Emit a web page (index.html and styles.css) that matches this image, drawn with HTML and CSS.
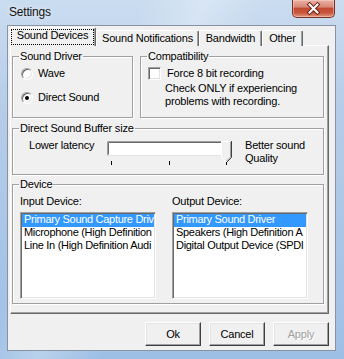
FILE: index.html
```html
<!DOCTYPE html>
<html>
<head>
<meta charset="utf-8">
<title>Settings</title>
<link rel="stylesheet" href="styles.css">
</head>
<body>
<div class="window">
  <div class="titlebar">
    <span class="title">Settings</span>
    <div class="close">
      <svg width="41" height="16" viewBox="0 0 41 16">
        <path d="M16.5 3.5 L24.5 11.5 M24.5 3.5 L16.5 11.5" stroke="#6a2418" stroke-width="4" stroke-linecap="square" fill="none"/>
        <path d="M16.5 3.5 L24.5 11.5 M24.5 3.5 L16.5 11.5" stroke="#ffffff" stroke-width="2" stroke-linecap="square" fill="none"/>
      </svg>
    </div>
  </div>
  <div class="client">
    <div class="tabs">
      <div class="tab selected t1"><span class="focus">Sound Devices</span></div>
      <div class="tab t2">Sound Notifications</div>
      <div class="tab t3">Bandwidth</div>
      <div class="tab t4">Other</div>
    </div>
    <div class="panel">
      <div class="row1">
        <fieldset class="group g-driver">
          <legend>Sound Driver</legend>
          <div class="opt"><span class="radio"></span>Wave</div>
          <div class="opt opt2"><span class="radio checked"></span>Direct Sound</div>
        </fieldset>
        <fieldset class="group g-compat">
          <legend>Compatibility</legend>
          <div class="opt opt-c"><span class="check"></span>Force 8 bit recording</div>
          <div class="note">Check ONLY if experiencing<br>problems with recording.</div>
        </fieldset>
      </div>
      <fieldset class="group g-buffer">
        <legend>Direct Sound Buffer size</legend>
        <div class="slider-row">
          <span class="lbl-low">Lower latency</span>
          <svg class="slider" width="125" height="25" viewBox="0 0 125 25">
            <rect x="0" y="0" width="123" height="15" fill="#ffffff"/>
            <path d="M0.5 14.5V0.5H122.5" stroke="#a0a0a0" fill="none"/>
            <path d="M1.5 13.5V1.5H121.5" stroke="#696969" fill="none"/>
            <path d="M0.5 14.5H122.5V0.5" stroke="#e3e3e3" fill="none"/>
            <polygon points="114,0 124,0 124,16 119,21 114,16" fill="#f0f0f0"/>
            <path d="M114.5 16V0.5H123.5" stroke="#ffffff" fill="none"/>
            <path d="M124.5 0V16.5L119.5 21.5" stroke="#404040" fill="none"/>
            <path d="M123.5 1V16L119.5 20" stroke="#a0a0a0" fill="none"/>
            <path d="M114.5 16.5L119 21" stroke="#ffffff" fill="none"/>
            <rect x="4" y="20" width="1" height="4" fill="#000000"/>
            <rect x="62" y="20" width="1" height="4" fill="#000000"/>
            <rect x="119" y="21" width="1" height="3" fill="#000000"/>
          </svg>
          <span class="lbl-high">Better sound<br>Quality</span>
        </div>
      </fieldset>
      <fieldset class="group g-device">
        <legend>Device</legend>
        <div class="lists">
          <div class="col">
            <div class="lbl">Input Device:</div>
            <div class="listbox">
              <div class="item sel">Primary Sound Capture Driv</div>
              <div class="item">Microphone (High Definition</div>
              <div class="item">Line In (High Definition Audi</div>
            </div>
          </div>
          <div class="col">
            <div class="lbl">Output Device:</div>
            <div class="listbox">
              <div class="item sel">Primary Sound Driver</div>
              <div class="item">Speakers (High Definition A</div>
              <div class="item">Digital Output Device (SPDI</div>
            </div>
          </div>
        </div>
      </fieldset>
    </div>
    <div class="buttons">
      <button class="btn">Ok</button>
      <button class="btn">Cancel</button>
      <button class="btn disabled">Apply</button>
    </div>
  </div>
</div>
</body>
</html>
```
FILE: styles.css
```css
html, body {
  margin: 0;
  padding: 0;
  width: 344px;
  height: 359px;
  overflow: hidden;
}

.window {
  box-sizing: border-box;
  width: 344px;
  height: 359px;
  padding: 0 8px 0 7px;
  display: flex;
  flex-direction: column;
  background:
    linear-gradient(115deg, rgba(255,255,255,0) 28%, rgba(255,255,255,0.28) 40%, rgba(255,255,255,0) 52%),
    linear-gradient(180deg, #cadcf0 0%, #b6cde8 30%, #9ebfe5 100%);
  font-family: "Liberation Sans", Arial, sans-serif;
  font-size: 11px;
  letter-spacing: -0.2px;
  color: #000;
}

.titlebar {
  height: 25px;
  flex: none;
  display: flex;
  justify-content: space-between;
  align-items: flex-start;
}

.title {
  font-size: 12px;
  line-height: 15px;
  padding-top: 5px;
  padding-left: 2px;
  color: #111;
  text-shadow: 0 0 6px rgba(255,255,255,0.9);
}

.close {
  width: 43px;
  height: 18px;
  box-sizing: border-box;
  margin-right: 1px;
  border: 1px solid #7a3022;
  border-top: none;
  border-radius: 0 0 5px 5px;
  background: linear-gradient(180deg, #eab0a2 0%, #d98a78 40%, #c24a33 50%, #c9553c 75%, #e09a80 100%);
  box-shadow: inset 0 0 0 1px rgba(255,220,210,0.45);
  display: flex;
  align-items: center;
  justify-content: center;
}

.client {
  box-sizing: border-box;
  width: 329px;
  height: 326px;
  flex: none;
  background: #f0f0f0;
  border: 1px solid rgba(50,70,100,0.55);
}

.tabs {
  position: relative;
  z-index: 1;
  display: flex;
  align-items: flex-end;
  height: 19px;
  margin: 1px 0 0 2px;
}

.tab {
  box-sizing: border-box;
  height: 16px;
  border-top: 1px solid #fff;
  border-left: 1px solid #fff;
  border-right: 1px solid #696969;
  border-radius: 2px 2px 0 0;
  box-shadow: inset -1px 0 0 #a0a0a0;
  text-align: center;
  line-height: 13px;
  padding-top: 1px;
  white-space: nowrap;
  background: #f0f0f0;
}

.tab.selected {
  height: 19px;
  padding-top: 0;
}

.t1 { width: 86px; }
.t2 { width: 103px; }
.t3 { width: 63px; }
.t4 { width: 41px; }

.focus {
  display: block;
  box-sizing: border-box;
  width: 83px;
  height: 16px;
  margin: 1px 0 0 0;
  border: 1px dotted #000;
  line-height: 11px;
}

.panel {
  box-sizing: border-box;
  width: 319px;
  height: 269px;
  margin: -1px 0 0 2px;
  padding: 4px 0 0 1px;
  border: 1px solid;
  border-color: #fff #696969 #696969 #fff;
  box-shadow: inset -1px -1px 0 #a0a0a0;
}

.group {
  box-sizing: border-box;
  margin: 0;
  padding: 0;
  min-width: 0;
  border: 1px solid #a0a0a0;
  box-shadow: inset 1px 1px 0 #fff, 1px 1px 0 #fff;
}

.group legend {
  padding: 0 1px;
  margin-left: 6px;
  line-height: 13px;
}

.row1 {
  display: flex;
  gap: 7px;
}

.g-driver {
  width: 121px;
  padding-bottom: 13px;
}

.g-compat {
  width: 184px;
}

.opt {
  display: flex;
  align-items: center;
  height: 13px;
  line-height: 13px;
  margin: 4px 0 0 8px;
  white-space: nowrap;
}

.opt2 {
  margin-top: 11px;
}

.opt-c {
  margin-left: 7px;
}

.radio {
  box-sizing: border-box;
  width: 12px;
  height: 12px;
  margin-right: 5px;
  border-radius: 50%;
  background: #fff;
  border: 1px solid;
  border-color: #a0a0a0 #fff #fff #a0a0a0;
  box-shadow: inset 1px 1px 0 #696969, inset -1px -1px 0 #e3e3e3;
  display: flex;
  align-items: center;
  justify-content: center;
}

.radio.checked::after {
  content: "";
  width: 4px;
  height: 4px;
  border-radius: 50%;
  background: #000;
}

.check {
  box-sizing: border-box;
  width: 13px;
  height: 13px;
  margin-right: 6px;
  background: #fff;
  border: 1px solid;
  border-color: #a0a0a0 #fff #fff #a0a0a0;
  box-shadow: inset 1px 1px 0 #696969, inset -1px -1px 0 #e3e3e3;
}

.note {
  margin: 2px 0 0 24px;
  line-height: 13px;
  white-space: nowrap;
}

.g-buffer {
  width: 312px;
  margin-top: 4px;
  padding-bottom: 8px;
}

.slider-row {
  display: flex;
  align-items: flex-start;
  margin-top: 4px;
  line-height: 13px;
}

.lbl-low {
  width: 78px;
  margin-left: 16px;
  white-space: nowrap;
}

.slider {
  display: block;
  margin-top: 2px;
  flex: none;
}

.lbl-high {
  margin-left: 13px;
  white-space: nowrap;
}

.g-device {
  width: 312px;
  margin-top: 3px;
  padding-bottom: 4px;
}

.lists {
  display: flex;
  gap: 16px;
  padding: 4px 0 0 7px;
}

.col {
  width: 136px;
}

.lbl {
  line-height: 13px;
  white-space: nowrap;
}

.listbox {
  box-sizing: border-box;
  width: 136px;
  height: 87px;
  margin-top: 4px;
  background: #fff;
  border: 1px solid;
  border-color: #a0a0a0 #fff #fff #a0a0a0;
  box-shadow: inset 1px 1px 0 #696969, inset -1px -1px 0 #e3e3e3;
  padding: 1px;
  overflow: hidden;
}

.item {
  box-sizing: border-box;
  height: 13px;
  line-height: 11px;
  padding: 0 0 2px 2px;
  white-space: nowrap;
  overflow: hidden;
  letter-spacing: -0.3px;
}

.item.sel {
  background: #3399ff;
  color: #fff;
}

.buttons {
  display: flex;
  justify-content: flex-end;
  gap: 8px;
  margin-top: 8px;
  padding-right: 6px;
}

.btn {
  box-sizing: border-box;
  width: 56px;
  height: 24px;
  padding: 0;
  margin: 0;
  font-family: "Liberation Sans", Arial, sans-serif;
  font-size: 11px;
  letter-spacing: -0.2px;
  color: #000;
  background: #f0f0f0;
  border: 1px solid;
  border-color: #fff #404040 #404040 #fff;
  box-shadow: inset -1px -1px 0 #a0a0a0, inset 1px 1px 0 #e3e3e3;
  border-radius: 0;
}

.btn.disabled {
  color: #a0a0a0;
  text-shadow: 1px 1px 0 #fff;
}
```
